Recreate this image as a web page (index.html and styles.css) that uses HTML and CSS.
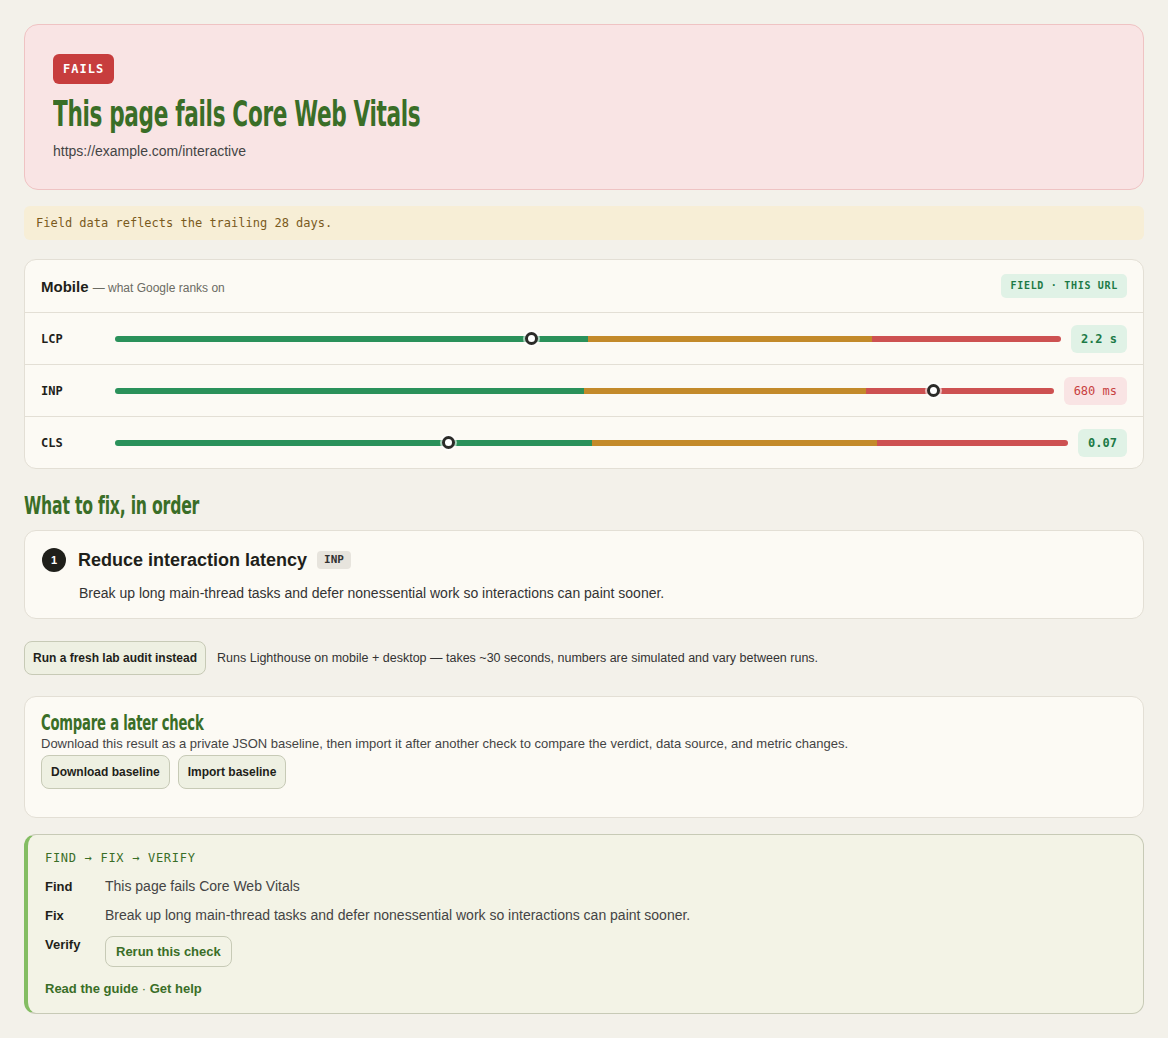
FILE: index.html
```html
<!DOCTYPE html>
<html lang="en">
<head>
<meta charset="UTF-8" />
<meta name="viewport" content="width=device-width, initial-scale=1" />
<title>Core Web Vitals check</title>
<link rel="stylesheet" href="styles.css">
</head>
<body>
  <main class="page">

    <section class="verdict">
      <span class="verdict-badge">FAILS</span>
      <h1 class="verdict-title"><span class="squeeze">This page fails Core Web Vitals</span></h1>
      <div class="verdict-url">https://example.com/interactive</div>
    </section>

    <div class="notice">Field data reflects the trailing 28 days.</div>

    <!-- Metrics -->
    <section class="metrics">
      <div class="metrics-head">
        <div><strong>Mobile</strong> <span class="muted">— what Google ranks on</span></div>
        <span class="source-tag">FIELD · THIS URL</span>
      </div>

      <div class="metric-row">
        <span class="metric-name">LCP</span>
        <div class="bar">
          <span class="seg good" style="flex: 50"></span>
          <span class="seg warn" style="flex: 30"></span>
          <span class="seg poor" style="flex: 20"></span>
          <span class="marker" style="left: 44%"></span>
        </div>
        <span class="pill pill-good">2.2 s</span>
      </div>

      <div class="metric-row">
        <span class="metric-name">INP</span>
        <div class="bar">
          <span class="seg good" style="flex: 50"></span>
          <span class="seg warn" style="flex: 30"></span>
          <span class="seg poor" style="flex: 20"></span>
          <span class="marker" style="left: 87.2%"></span>
        </div>
        <span class="pill pill-poor">680 ms</span>
      </div>

      <div class="metric-row">
        <span class="metric-name">CLS</span>
        <div class="bar">
          <span class="seg good" style="flex: 50"></span>
          <span class="seg warn" style="flex: 30"></span>
          <span class="seg poor" style="flex: 20"></span>
          <span class="marker" style="left: 35%"></span>
        </div>
        <span class="pill pill-good">0.07</span>
      </div>
    </section>

    <h2 class="section-title"><span class="squeeze">What to fix, in order</span></h2>

    <section class="card fix">
      <div class="fix-head">
        <span class="fix-num">1</span>
        <span class="fix-title">Reduce interaction latency</span>
        <span class="fix-tag">INP</span>
      </div>
      <p class="fix-desc">Break up long main-thread tasks and defer nonessential work so interactions can paint sooner.</p>
    </section>

    <div class="lab-row">
      <button type="button" class="btn">Run a fresh lab audit instead</button>
      <span class="lab-note">Runs Lighthouse on mobile + desktop — takes ~30 seconds, numbers are simulated and vary between runs.</span>
    </div>

    <section class="card compare">
      <h3 class="compare-title"><span class="squeeze">Compare a later check</span></h3>
      <p class="compare-desc">Download this result as a private JSON baseline, then import it after another check to compare the verdict, data source, and metric changes.</p>
      <div class="btn-row">
        <button type="button" class="btn">Download baseline</button>
        <button type="button" class="btn">Import baseline</button>
      </div>
    </section>

    <section class="loop">
      <div class="loop-label">FIND → FIX → VERIFY</div>
      <div class="loop-grid">
        <span class="loop-key">Find</span>
        <span class="loop-val">This page fails Core Web Vitals</span>
        <span class="loop-key">Fix</span>
        <span class="loop-val">Break up long main-thread tasks and defer nonessential work so interactions can paint sooner.</span>
        <span class="loop-key">Verify</span>
        <span><button type="button" class="btn btn-green">Rerun this check</button></span>
      </div>
      <div class="loop-links"><a href="#">Read the guide</a> · <a href="#">Get help</a></div>
    </section>

  </main>
</body>
</html>
```

FILE: styles.css
```css
/* BASE */
* {
  box-sizing: border-box;
}
html, body {
  margin: 0;
  padding: 0;
}
body {
  background: #f3f1ea;
  color: #1f1f1a;
  font-family: "Liberation Sans", Arial, sans-serif;
  font-size: 14px;
}

.page {
  padding: 24px;
  display: flex;
  flex-direction: column;
}

/* condensed display headings */
.squeeze {
  display: inline-block;
  transform-origin: left center;
  white-space: nowrap;
}

/* VERDICT */
.verdict {
  background: #f9e4e4;
  border: 1px solid #efc3c3;
  border-radius: 14px;
  padding: 29px 28px 30px;
}
.verdict-badge {
  display: inline-block;
  background: #c73d3d;
  color: #fff;
  font-family: "DejaVu Sans Mono", monospace;
  font-weight: bold;
  font-size: 12px;
  letter-spacing: 1px;
  padding: 7px 10px;
  border-radius: 6px;
  line-height: 16px;
}
.verdict-title {
  margin: 10px 0 0;
  font-family: "DejaVu Sans Condensed", "DejaVu Sans", sans-serif;
  font-weight: bold;
  font-size: 36px;
  line-height: 40px;
  color: #3a6e27;
  letter-spacing: -0.5px;
}
.verdict-title .squeeze {
  transform: scaleX(0.667);
}
.verdict-url {
  margin-top: 9px;
  font-size: 14px;
  color: #444;
}

.notice {
  margin-top: 16px;
  background: #f7eed6;
  border-radius: 6px;
  padding: 9px 12px;
  font-family: "DejaVu Sans Mono", monospace;
  font-size: 12px;
  line-height: 16px;
  color: #7a5a1c;
}

/* METRICS */
.metrics {
  margin-top: 19px;
  background: #fcfaf4;
  border: 1px solid #e3dfd5;
  border-radius: 12px;
  overflow: hidden;
}
.metrics-head {
  display: flex;
  align-items: center;
  justify-content: space-between;
  padding: 0 16px;
  height: 52px;
  font-size: 15px;
}
.muted {
  color: #6b6b63;
  font-size: 12px;
}
.source-tag {
  background: #e0f2e6;
  color: #1d7a46;
  font-family: "DejaVu Sans Mono", monospace;
  font-weight: bold;
  font-size: 10px;
  letter-spacing: 0.7px;
  padding: 6px 9px;
  border-radius: 5px;
  line-height: 12px;
}
.metric-row {
  display: flex;
  align-items: center;
  gap: 10px;
  height: 52px;
  border-top: 1px solid #e3dfd5;
  padding: 0 16px;
}
.metric-name {
  width: 64px;
  font-family: "DejaVu Sans Mono", monospace;
  font-weight: bold;
  font-size: 12px;
}
.bar {
  position: relative;
  flex: 1;
  display: flex;
  height: 6px;
}
.seg {
  height: 6px;
}
.seg.good {
  background: #2a915a;
  border-radius: 3px 0 0 3px;
}
.seg.warn {
  background: #c38a2a;
}
.seg.poor {
  background: #cd5151;
  border-radius: 0 3px 3px 0;
}
.marker {
  position: absolute;
  top: 50%;
  width: 13px;
  height: 13px;
  margin: -6.5px 0 0 -6.5px;
  border-radius: 50%;
  background: #fff;
  border: 3px solid #2b2b28;
  box-shadow: 0 0 0 2px rgba(255, 255, 255, 0.6);
}
.pill {
  font-family: "DejaVu Sans Mono", monospace;
  font-weight: bold;
  font-size: 12px;
  height: 28px;
  line-height: 28px;
  padding: 0 10px;
  border-radius: 6px;
}
.pill-good {
  background: #e0f2e6;
  color: #1d7a46;
}
.pill-poor {
  background: #f9e4e4;
  color: #c84040;
  font-weight: normal;
}

/* FIX LIST */
.section-title {
  margin: 20px 0 7px;
  font-family: "DejaVu Sans Condensed", "DejaVu Sans", sans-serif;
  font-weight: bold;
  font-size: 25px;
  line-height: 34px;
  color: #3a6e27;
  letter-spacing: -0.3px;
}
.section-title .squeeze {
  transform: scaleX(0.697);
}
.card {
  background: #fcfaf4;
  border: 1px solid #e3dfd5;
  border-radius: 12px;
}
.fix {
  padding: 17px 17px 17px;
}
.fix-head {
  display: flex;
  align-items: center;
  gap: 12px;
}
.fix-num {
  width: 24px;
  height: 24px;
  border-radius: 50%;
  background: #1f1f1a;
  color: #fff;
  font-size: 11px;
  font-weight: bold;
  display: flex;
  align-items: center;
  justify-content: center;
}
.fix-title {
  font-size: 18px;
  font-weight: bold;
}
.fix-tag {
  margin-left: -2px;
  background: #e7e4dd;
  font-family: "DejaVu Sans Mono", monospace;
  font-weight: bold;
  font-size: 11px;
  line-height: 14px;
  padding: 2px 7px;
  border-radius: 4px;
  color: #333;
}
.fix-desc {
  margin: 13px 0 0 37px;
  font-size: 14px;
  line-height: 16px;
  color: #333;
}

/* BUTTONS */
.btn {
  font-family: "Liberation Sans", Arial, sans-serif;
  font-weight: bold;
  font-size: 12px;
  color: #1f1f1a;
  background: #eef0e2;
  border: 1px solid #c7cab6;
  border-radius: 8px;
  padding: 0 9px;
  height: 34px;
  cursor: pointer;
}
.lab-row .btn {
  padding: 0 8px;
}
.btn-green {
  color: #3a6e27;
  background: transparent;
  font-size: 13px;
  height: 31px;
  padding: 0 10px;
}

.lab-row {
  margin-top: 22px;
  display: flex;
  align-items: center;
  gap: 11px;
}
.lab-note {
  font-size: 12.5px;
  color: #333;
}

.compare {
  margin-top: 21px;
  padding: 13px 16px 28px;
}
.compare-title {
  margin: 0;
  font-family: "DejaVu Sans Condensed", "DejaVu Sans", sans-serif;
  font-weight: bold;
  font-size: 21px;
  line-height: 26px;
  color: #3a6e27;
  letter-spacing: -0.3px;
}
.compare-title .squeeze {
  transform: scaleX(0.698);
}
.compare-desc {
  margin: 0;
  font-size: 13px;
  line-height: 16px;
  color: #444;
}
.btn-row {
  margin-top: 3px;
  display: flex;
  gap: 8px;
}

/* FIND FIX VERIFY */
.loop {
  margin-top: 16px;
  background: #f3f3e6;
  border: 1px solid #c7cab6;
  border-left: 4px solid #84bd63;
  border-radius: 12px;
  padding: 15px 17px 16px;
}
.loop-label {
  font-family: "DejaVu Sans Mono", monospace;
  font-size: 12px;
  line-height: 16px;
  letter-spacing: 0.7px;
  color: #3a6e27;
}
.loop-grid {
  margin-top: 12px;
  display: grid;
  grid-template-columns: 60px 1fr;
  row-gap: 12px;
  align-items: start;
  line-height: 17px;
}
.loop-key {
  font-weight: bold;
  font-size: 13px;
}
.loop-val {
  font-size: 14px;
  color: #444;
}
.loop-links {
  margin-top: 13px;
  font-size: 13px;
  line-height: 17px;
  color: #3a6e27;
}
.loop-links a {
  color: #3a6e27;
  font-weight: bold;
  text-decoration: none;
}
```
